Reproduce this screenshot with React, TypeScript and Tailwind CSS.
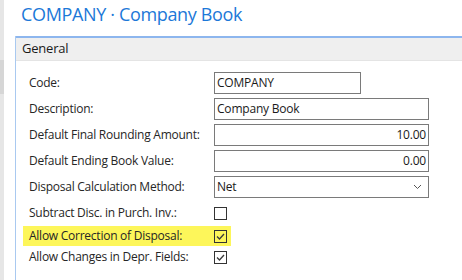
import React from "react";

const font = { fontFamily: '"Open Sans", "Noto Sans", sans-serif' };

function Check() {
  return (
    <svg width="11" height="11" viewBox="0 0 11 11" className="block">
      <polyline points="2,5.5 4.5,8 9,3" fill="none" stroke="#3a3a3a" strokeWidth="1.3" />
    </svg>
  );
}

function Box({ checked }: { checked?: boolean }) {
  return (
    <div className="w-[13px] h-[13px] border border-[#333333] bg-transparent flex items-center justify-center">
      {checked ? <Check /> : null}
    </div>
  );
}

const labelCls = "w-[198px] pl-[13px] text-[12px] tracking-[-0.25px] text-[#262626] whitespace-nowrap";

function InputRow({ label, value, width, right, select }: { label: string; value: string; width: number; right?: boolean; select?: boolean }) {
  return (
    <div className="h-[26px] flex items-center">
      <div className={labelCls}>{label}</div>
      <div
        className={`h-[22px] border border-[#7a7a7a] bg-white flex items-center px-[2px] text-[12px] tracking-[-0.2px] text-[#1a1a1a] ${right ? "justify-end" : "justify-between"}`}
        style={{ width }}
      >
        <span>{value}</span>
        {select ? (
          <svg width="9" height="6" viewBox="0 0 9 6" className="mr-[4px]">
            <polyline points="1,1 4.5,4.5 8,1" fill="none" stroke="#555" strokeWidth="1" />
          </svg>
        ) : null}
      </div>
    </div>
  );
}

export default function App() {
  return (
    <div className="w-[462px] h-[280px] overflow-hidden bg-white flex" style={font}>
      <div className="w-[4px] h-full bg-[#e6e6e6] flex flex-col shrink-0">
        <div className="h-[60px]" />
        <div className="h-[34px] bg-[#d6d6d6]" />
      </div>
      <div className="flex-1 flex flex-col">
        <div className="h-[36px] pl-[17px] pt-[2px] text-[18px] tracking-[-0.35px] leading-[24px] text-[#1c78d8] whitespace-nowrap">
          COMPANY · Company Book
        </div>
        <div className="ml-[11px] flex-1 border-l border-[#a9c9f0] flex flex-col">
          <div className="h-[2px] bg-[#8db6ee]" />
          <div className="h-[23px] bg-[#efefef] border-b border-[#e4e4e4] flex items-center pl-[6px] text-[13px] tracking-[-0.2px] text-[#1a1a1a]">
            General
          </div>
          <div className="pt-[9px] flex flex-col">
            <InputRow label="Code:" value="COMPANY" width={147} />
            <InputRow label="Description:" value="Company Book" width={215} />
            <InputRow label="Default Final Rounding Amount:" value="10.00" width={215} right />
            <InputRow label="Default Ending Book Value:" value="0.00" width={215} right />
            <InputRow label="Disposal Calculation Method:" value="Net" width={215} select />
            <div className="h-[2px]" />
            <div className="h-[22px] flex items-center">
              <div className={labelCls}>Subtract Disc. in Purch. Inv.:</div>
              <Box />
            </div>
            <div className="h-[22px] pl-[7px] pt-[2px]">
              <div className="w-[208px] h-[20px] bg-[#fdf65a] flex items-center">
                <div className="w-[191px] pl-[6px] text-[12px] tracking-[-0.25px] text-[#262626] whitespace-nowrap">Allow Correction of Disposal:</div>
                <Box checked />
              </div>
            </div>
            <div className="h-[22px] flex items-center">
              <div className={labelCls}>Allow Changes in Depr. Fields:</div>
              <Box checked />
            </div>
          </div>
        </div>
      </div>
    </div>
  );
}
